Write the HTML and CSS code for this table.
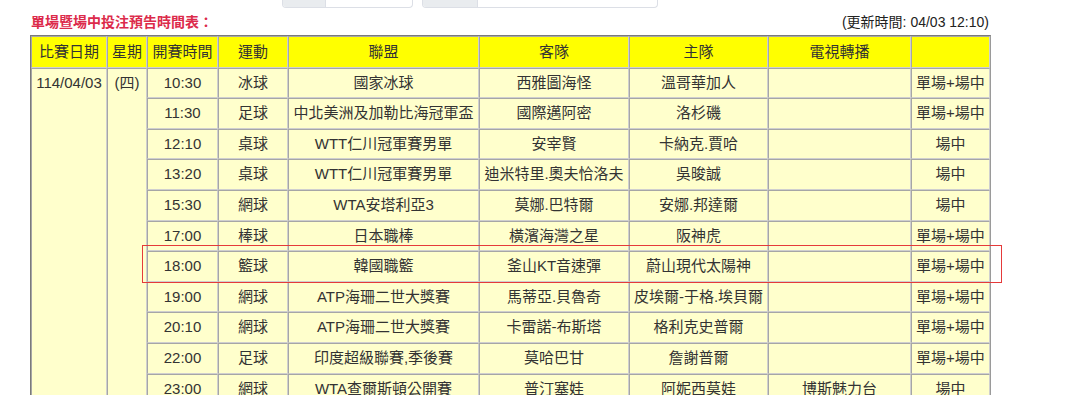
FILE: index.html
```html
<!DOCTYPE html>
<html lang="zh-Hant">
<head>
<meta charset="utf-8">
<title>單場暨場中投注預告時間表</title>
<link rel="stylesheet" href="styles.css">
</head>
<body>
<div class="topbar">
  <div class="inputbox small"><span class="prepend"></span><span class="field"></span></div>
  <div class="inputbox large"><span class="prepend"></span><span class="field"></span></div>
</div>
<div class="content">
  <div class="titlebar">
    <span class="title">單場暨場中投注預告時間表：</span>
    <span class="updated">(更新時間: 04/03 12:10)</span>
  </div>
  <div class="tablewrap">
    <table class="schedule">
      <colgroup>
        <col class="c-date"><col class="c-week"><col class="c-time"><col class="c-sport"><col class="c-league"><col class="c-away"><col class="c-home"><col class="c-tv"><col class="c-type">
      </colgroup>
      <thead>
        <tr><th>比賽日期</th><th>星期</th><th>開賽時間</th><th>運動</th><th>聯盟</th><th>客隊</th><th>主隊</th><th>電視轉播</th><th></th></tr>
      </thead>
      <tbody>
        <tr><td rowspan="11" class="span">114/04/03</td><td rowspan="11" class="span">(四)</td><td>10:30</td><td>冰球</td><td>國家冰球</td><td>西雅圖海怪</td><td>溫哥華加人</td><td></td><td>單場+場中</td></tr>
        <tr><td>11:30</td><td>足球</td><td>中北美洲及加勒比海冠軍盃</td><td>國際邁阿密</td><td>洛杉磯</td><td></td><td>單場+場中</td></tr>
        <tr><td>12:10</td><td>桌球</td><td>WTT仁川冠軍賽男單</td><td>安宰賢</td><td>卡納克.賈哈</td><td></td><td>場中</td></tr>
        <tr><td>13:20</td><td>桌球</td><td>WTT仁川冠軍賽男單</td><td>迪米特里.奧夫恰洛夫</td><td>吳晙誠</td><td></td><td>場中</td></tr>
        <tr><td>15:30</td><td>網球</td><td>WTA安塔利亞3</td><td>莫娜.巴特爾</td><td>安娜.邦達爾</td><td></td><td>場中</td></tr>
        <tr><td>17:00</td><td>棒球</td><td>日本職棒</td><td>橫濱海灣之星</td><td>阪神虎</td><td></td><td>單場+場中</td></tr>
        <tr><td>18:00</td><td>籃球</td><td>韓國職籃</td><td>釜山KT音速彈</td><td>蔚山現代太陽神</td><td></td><td>單場+場中</td></tr>
        <tr><td>19:00</td><td>網球</td><td>ATP海珊二世大獎賽</td><td>馬蒂亞.貝魯奇</td><td>皮埃爾-于格.埃貝爾</td><td></td><td>單場+場中</td></tr>
        <tr><td>20:10</td><td>網球</td><td>ATP海珊二世大獎賽</td><td>卡雷諾-布斯塔</td><td>格利克史普爾</td><td></td><td>單場+場中</td></tr>
        <tr><td>22:00</td><td>足球</td><td>印度超級聯賽,季後賽</td><td>莫哈巴甘</td><td>詹謝普爾</td><td></td><td>單場+場中</td></tr>
        <tr><td>23:00</td><td>網球</td><td>WTA查爾斯頓公開賽</td><td>普汀塞娃</td><td>阿妮西莫娃</td><td>博斯魅力台</td><td>場中</td></tr>
      </tbody>
    </table>
    <div class="highlight"></div>
  </div>
</div>
</body>
</html>
```

FILE: styles.css
```css
html, body {
  margin: 0;
  padding: 0;
  background: #ffffff;
  font-family: "Liberation Sans", "Noto Sans CJK TC", sans-serif;
  color: #333333;
}

.topbar {
  display: flex;
  gap: 9px;
  padding-left: 282px;
  height: 8px;
}

.inputbox {
  display: flex;
  height: 7px;
  border: 1px solid #dcdfe6;
  border-top: none;
  border-radius: 0 0 4px 4px;
  overflow: hidden;
  background: #ffffff;
}

.inputbox.small { width: 129px; }
.inputbox.large { width: 234px; }

.inputbox .prepend {
  background: #e9ecef;
  border-right: 1px solid #dcdfe6;
}

.inputbox.small .prepend { width: 42px; }
.inputbox.large .prepend { width: 54px; }

.content {
  margin-left: 30px;
  width: 959px;
}

.titlebar {
  display: flex;
  justify-content: space-between;
  align-items: flex-end;
  height: 27px;
  line-height: 16px;
  font-size: 14px;
}

.title {
  color: #dc2b4b;
  font-weight: bold;
  padding-left: 1px;
  padding-bottom: 5px;
}

.updated {
  color: #222222;
  padding-bottom: 5px;
}

.tablewrap {
  position: relative;
}

.schedule {
  width: 959px;
  table-layout: fixed;
  border-collapse: separate;
  border-spacing: 0;
  border: 1px solid #7a7a7a;
  border-right-color: #9a9a9a;
  font-size: 15px;
  line-height: 16.6px;
}

.c-date { width: 76px; }
.c-week { width: 40px; }
.c-time { width: 71px; }
.c-sport { width: 70px; }
.c-league { width: 191px; }
.c-away { width: 150px; }
.c-home { width: 139px; }
.c-tv { width: 143px; }
.c-type { width: 79px; }

.schedule th,
.schedule td {
  border-style: solid;
  border-width: 1px;
  border-color: #a6a6a6 #cfcfcf #cfcfcf #a6a6a6;
  padding: 6px 2px;
  text-align: center;
  white-space: nowrap;
  overflow: hidden;
  color: #333333;
  font-weight: normal;
}

.schedule th {
  background: #ffff00;
  padding-top: 7px;
}

.schedule td {
  background: #ffffcc;
}

.schedule td.span {
  vertical-align: top;
}

.highlight {
  position: absolute;
  left: 112px;
  top: 210px;
  width: 858px;
  height: 36px;
  border: 1px solid #e53a3a;
  pointer-events: none;
}
```
